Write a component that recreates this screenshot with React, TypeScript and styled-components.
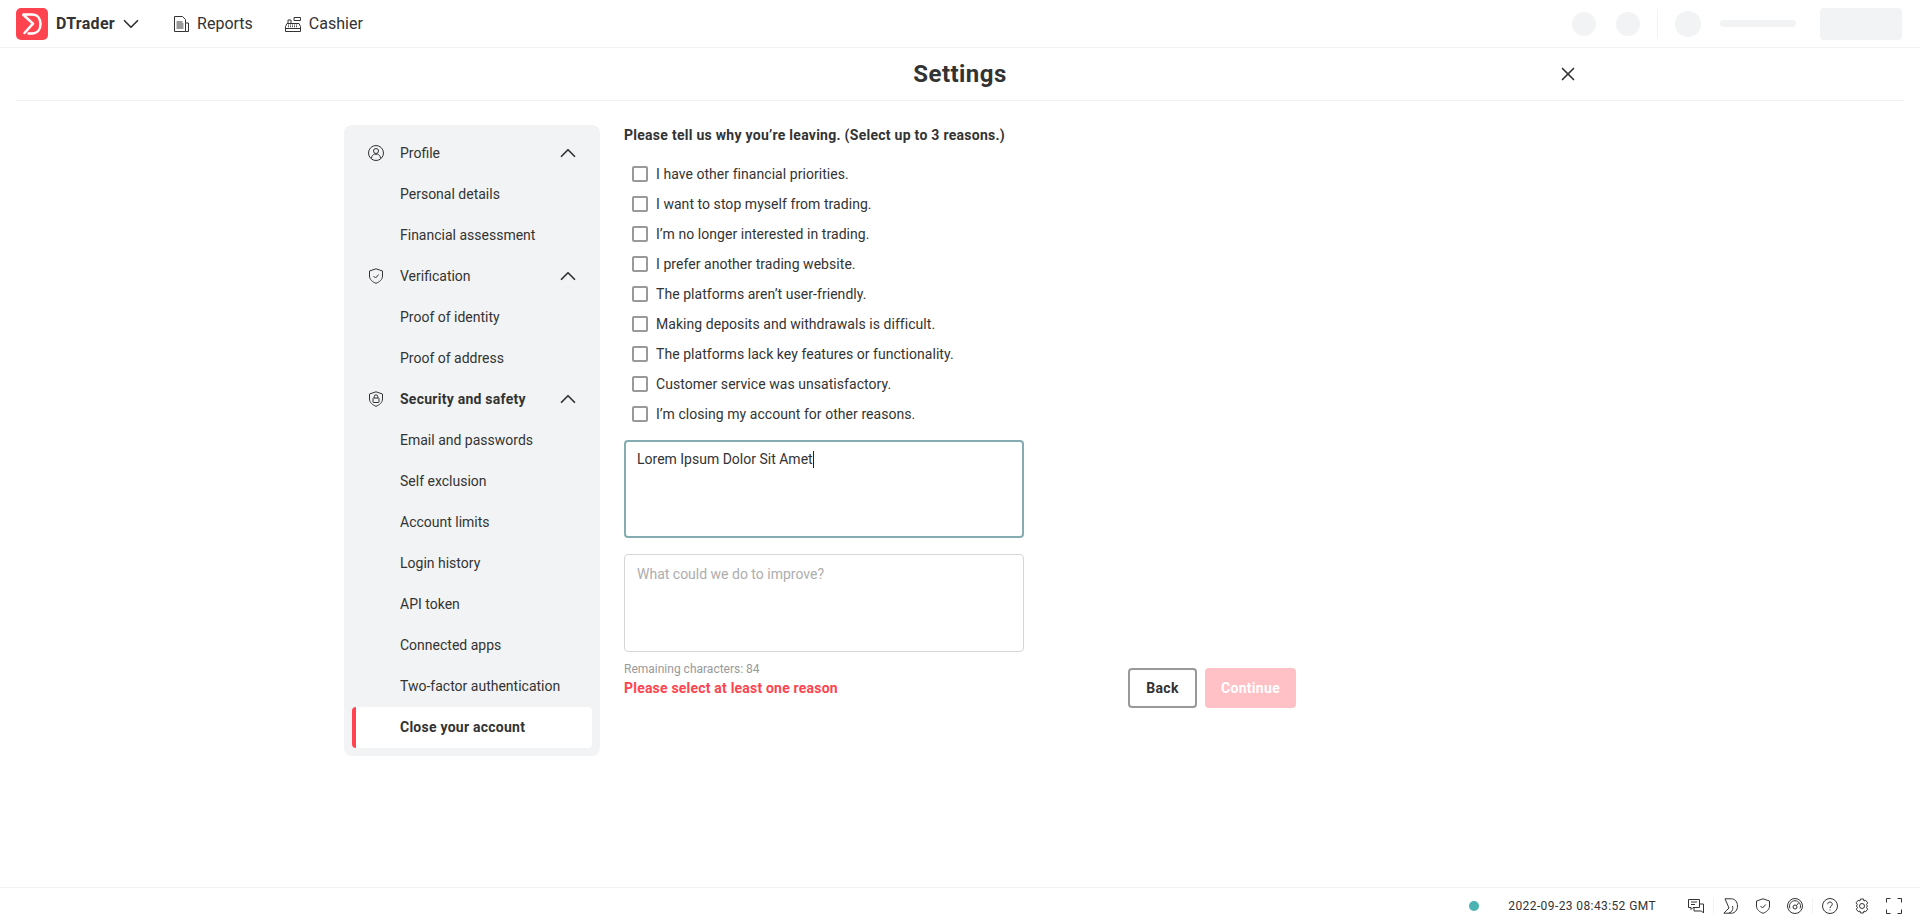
import React from "react";
import styled, {createGlobalStyle} from "styled-components";
import {ChevronDown, ChevronUp, X} from "lucide-react";

const GlobalStyle = createGlobalStyle`
  html, body {
    margin: 0;
    padding: 0;
    height: 100%;
    background: #fff;
    color: #333;
    font-family: Roboto, "Liberation Sans", sans-serif;
  }
  * { box-sizing: border-box; }
`;

const Page = styled.div`
  width: 1920px;
  height: 923px;
  display: flex;
  flex-direction: column;
  overflow: hidden;
`;

const Header = styled.header`
  height: 48px;
  flex: none;
  display: flex;
  align-items: center;
  justify-content: space-between;
  padding: 0 18px 0 16px;
  border-bottom: 1px solid #f2f3f4;
`;

const HeaderLeft = styled.div`
  display: flex;
  align-items: center;
`;

const LogoBox = styled.div`
  width: 32px;
  height: 32px;
  display: flex;
`;

const Brand = styled.span`
  margin-left: 8px;
  font-size: 16px;
  font-weight: 700;
  letter-spacing: 0.3px;
  color: #333;
`;

const BrandCaret = styled.span`
  display: flex;
  margin-left: 3px;
  color: #333;
`;

const NavLink = styled.a<{$first?: boolean}>`
  display: flex;
  align-items: center;
  gap: 8px;
  margin-left: ${p => (p.$first ? "29px" : "32px")};
  font-size: 16px;
  color: #333;
`;

const HeaderRight = styled.div`
  display: flex;
  align-items: center;
`;

const SkeletonCircle = styled.div<{$size: number; $gap: number}>`
  width: ${p => p.$size}px;
  height: ${p => p.$size}px;
  margin-right: ${p => p.$gap}px;
  border-radius: 50%;
  background: #f2f3f4;
`;

const HeaderDivider = styled.div`
  width: 1px;
  height: 29px;
  margin-right: 17px;
  background: #f2f3f4;
`;

const SkeletonBar = styled.div`
  width: 76px;
  height: 7px;
  margin-right: 24px;
  border-radius: 4px;
  background: #f2f3f4;
`;

const SkeletonButton = styled.div`
  width: 82px;
  height: 32px;
  border-radius: 4px;
  background: #f2f3f4;
`;

const TitleBar = styled.div`
  position: relative;
  height: 53px;
  flex: none;
  margin: 0 16px;
  display: flex;
  align-items: center;
  justify-content: center;
  border-bottom: 1px solid #f2f3f4;
`;

const Title = styled.h1`
  margin: 0;
  font-size: 24px;
  font-weight: 700;
  letter-spacing: 0.45px;
  color: #333;
`;

const CloseButton = styled.span`
  position: absolute;
  left: 1541px;
  top: 15px;
  display: flex;
  color: #333;
`;

const Main = styled.main`
  flex: 1;
  display: flex;
  align-items: flex-start;
  padding: 24px 0 0 344px;
`;

const Sidebar = styled.nav`
  width: 256px;
  flex: none;
  padding: 8px;
  border-radius: 8px;
  background: #f2f3f4;
`;

const SideRow = styled.div<{$active?: boolean; $bold?: boolean; $group?: boolean}>`
  height: 41px;
  display: flex;
  align-items: center;
  padding-left: ${p => (p.$group ? "16px" : "48px")};
  padding-right: 11px;
  padding-bottom: 1px;
  font-size: 14px;
  font-weight: ${p => (p.$active || p.$bold ? 700 : 400)};
  letter-spacing: ${p => (p.$active || p.$bold ? "0.25px" : "0")};
  color: #333;
  border-radius: 4px;
  background: ${p => (p.$active ? "#fff" : "transparent")};
  ${p => p.$active && "border-left: 4px solid #ff444f; padding-left: 44px;"}
`;

const SideIcon = styled.span`
  display: flex;
  margin-right: 16px;
  color: #333;
`;

const SideCaret = styled.span`
  display: flex;
  margin-left: auto;
  color: #333;
`;

const Content = styled.section`
  width: 672px;
  margin-left: 24px;
`;

const Question = styled.p`
  margin: 0 0 14px;
  font-size: 14px;
  line-height: 20px;
  font-weight: 700;
  letter-spacing: 0.27px;
  color: #333;
`;

const Reasons = styled.div`
  display: flex;
  flex-direction: column;
  padding-left: 8px;
`;

const Reason = styled.label`
  height: 30px;
  display: flex;
  align-items: center;
  gap: 8px;
  font-size: 14px;
  letter-spacing: 0.05px;
  color: #333;
`;

const Check = styled.span`
  width: 16px;
  height: 16px;
  flex: none;
  border: 2px solid #999;
  border-radius: 2px;
`;

const TextBox = styled.div<{$focused?: boolean}>`
  width: 400px;
  height: 98px;
  margin-top: ${p => (p.$focused ? "11px" : "16px")};
  padding: ${p => (p.$focused ? "7px 11px" : "9px 12px")};
  border: ${p => (p.$focused ? "2px solid #85acb0" : "1.5px solid #d6d6d6")};
  border-radius: 4px;
  font-size: 14px;
  line-height: 20px;
  color: ${p => (p.$focused ? "#333" : "#adadad")};
`;

const Caret = styled.span`
  display: inline-block;
  width: 1px;
  height: 17px;
  vertical-align: -4px;
  background: #222;
`;

const FormFooter = styled.div`
  display: flex;
  justify-content: space-between;
`;

const FormMessages = styled.div`
  padding-top: 10px;
`;

const Remaining = styled.div`
  font-size: 12px;
  line-height: 14px;
  color: #999;
`;

const ErrorText = styled.div`
  margin-top: 2px;
  font-size: 14px;
  line-height: 20px;
  font-weight: 700;
  letter-spacing: 0.2px;
  color: #ff444f;
`;

const Buttons = styled.div`
  display: flex;
  gap: 8px;
  padding-top: 16px;
`;

const Button = styled.button<{$primary?: boolean}>`
  height: 40px;
  padding: 0;
  width: ${p => (p.$primary ? "91px" : "69px")};
  border-radius: 4px;
  border: ${p => (p.$primary ? "none" : "2px solid #999")};
  background: ${p => (p.$primary ? "#ffc1c5" : "#fff")};
  color: ${p => (p.$primary ? "#fff" : "#333")};
  font-family: inherit;
  font-size: 14px;
  font-weight: 700;
  letter-spacing: 0.3px;
`;

const Footer = styled.footer`
  height: 36px;
  flex: none;
  display: flex;
  align-items: center;
  justify-content: flex-end;
  padding-right: 18px;
  border-top: 1px solid #f2f3f4;
`;

const StatusDot = styled.span`
  width: 10px;
  height: 10px;
  margin-right: 29px;
  border-radius: 50%;
  background: #4bb4b3;
`;

const Clock = styled.span`
  margin-right: 32px;
  font-size: 12px;
  letter-spacing: 0.4px;
  color: #333;
`;

const FooterIcon = styled.span<{$gap: number}>`
  display: flex;
  margin-right: ${p => p.$gap}px;
  color: #333;
`;

const FooterDivider = styled.span`
  width: 1px;
  height: 16px;
  margin: 0 9px;
  background: #f2f3f4;
`;

const LogoMark = () => (
  <svg width="32" height="32" viewBox="0 0 32 32" fill="none">
    <rect width="32" height="32" rx="5" fill="#ff444f"/>
    <path d="M7.500 6.500H16c5.500 0 8.500 4 8.500 9.500s-3 9.500-8.500 9.500h-3.500" stroke="#fff" strokeWidth="2.500" strokeLinecap="round"/>
    <path d="M7.500 7l9.500 8.700L8.500 25" stroke="#fff" strokeWidth="2.500" strokeLinecap="round" strokeLinejoin="round"/>
  </svg>
);

const ReportsIcon = () => (
  <svg width="16" height="16" viewBox="0 0 16 16" fill="none" stroke="currentColor" strokeWidth="1">
    <path d="M1.500 15.500V.5h8l3 3v12z"/>
    <path d="M12.500 7h3v8.500h-3M3.500 6h6M3.500 8h7M3.500 10h7M3.500 12h7"/>
  </svg>
);

const CashierIcon = () => (
  <svg width="16" height="16" viewBox="0 0 16 16" fill="none" stroke="currentColor" strokeWidth="1">
    <path d="M.5 15.500v-5l1.500-3h12l1.500 3v5z"/>
    <path d="M.5 12.500h15M3 9h1M5 9h1M7 9h1M9 9h1M11 9h1M3 10.700h1M5 10.700h1M7 10.700h1M9 10.700h1M11 10.700h1"/>
    <path d="M3 7V4h3v3M9 1.500h6.500v3H9z"/>
  </svg>
);

const ProfileIcon = () => (
  <svg width="16" height="16" viewBox="0 0 16 16" fill="none" stroke="currentColor" strokeWidth="1">
    <circle cx="8" cy="8" r="7.500"/>
    <circle cx="8" cy="6" r="2.500"/>
    <path d="M3.500 13.500c0-2.500 1.500-4 3-4.300h3c1.500.3 3 1.800 3 4.300"/>
  </svg>
);

const ShieldCheckIcon = () => (
  <svg width="16" height="16" viewBox="0 0 16 16" fill="none" stroke="currentColor" strokeWidth="1">
    <path d="M8 .8l6.500 2.200v5c0 3.500-3 6-6.500 7.300C4.500 14 1.500 11.500 1.500 8V3z"/>
    <path d="M5.500 8l2 2 3.200-3.500"/>
  </svg>
);

const ShieldLockIcon = () => (
  <svg width="16" height="16" viewBox="0 0 16 16" fill="none" stroke="currentColor" strokeWidth="1">
    <path d="M8 .8l6.500 2.200v5c0 3.500-3 6-6.500 7.300C4.500 14 1.500 11.500 1.500 8V3z"/>
    <rect x="5" y="7" width="6" height="4.500" rx=".5"/>
    <path d="M6.300 7V5.500a1.700 1.700 0 013.400 0V7"/>
  </svg>
);

const ChatIcon = () => (
  <svg width="16" height="16" viewBox="0 0 16 16" fill="none" stroke="currentColor" strokeWidth="1">
    <path d="M.5 1.500h11v8H5L3 11.500v-2H.5z"/>
    <path d="M3 4h6M3 6.500h4M11.500 6h4v9l-2-2H6v-3.500"/>
  </svg>
);

const ChartTypeIcon = () => (
  <svg width="16" height="16" viewBox="0 0 16 16" fill="none" stroke="currentColor" strokeWidth="1">
    <path d="M2 .8h6.500c3.500 0 6 3.200 6 7.200s-2.500 7.200-6 7.200H.8L6 10 2 .8z"/>
    <path d="M6 15c3-1 4.500-3.500 3.500-7"/>
  </svg>
);

const GaugeIcon = () => (
  <svg width="16" height="16" viewBox="0 0 16 16" fill="none" stroke="currentColor" strokeWidth="1">
    <circle cx="8" cy="8" r="7.500"/>
    <path d="M3 10.500a5.500 5.500 0 1110 0"/>
    <circle cx="8" cy="9" r="2"/>
    <path d="M9.500 7.500l2-2.500"/>
  </svg>
);

const HelpIcon = () => (
  <svg width="16" height="16" viewBox="0 0 16 16" fill="none" stroke="currentColor" strokeWidth="1">
    <circle cx="8" cy="8" r="7.500"/>
    <path d="M5.700 6.200C5.700 4.800 6.700 4 8 4s2.300.9 2.300 2.100c0 1.800-2.300 1.900-2.300 3.900"/>
    <path d="M8 11.500v1"/>
  </svg>
);

const GearIcon = () => (
  <svg width="16" height="16" viewBox="0 0 16 16" fill="none" stroke="currentColor" strokeWidth="1">
    <path d="M6.500 1h3l.5 2 1.700-.7 2 2.500-1.200 1.700.9 1.500-.9 1.500 1.200 1.700-2 2.500-1.700-.7-.5 2h-3l-.5-2-1.700.7-2-2.500 1.200-1.700L2.400 8l.9-1.500-1.200-1.700 2-2.500 1.700.7z"/>
    <circle cx="8" cy="8" r="2.500"/>
  </svg>
);

const FullscreenIcon = () => (
  <svg width="16" height="16" viewBox="0 0 16 16" fill="none" stroke="currentColor" strokeWidth="1">
    <path d="M.5 4.500v-4h4M11.500.5h4v4M15.500 11.500v4h-4M4.500 15.500h-4v-4"/>
  </svg>
);

const reasons = [
  "I have other financial priorities.",
  "I want to stop myself from trading.",
  "I’m no longer interested in trading.",
  "I prefer another trading website.",
  "The platforms aren’t user-friendly.",
  "Making deposits and withdrawals is difficult.",
  "The platforms lack key features or functionality.",
  "Customer service was unsatisfactory.",
  "I’m closing my account for other reasons.",
];

const sideGroups = [
  {title: "Profile", icon: <ProfileIcon/>, items: ["Personal details", "Financial assessment"]},
  {title: "Verification", icon: <ShieldCheckIcon/>, items: ["Proof of identity", "Proof of address"]},
  {
    title: "Security and safety",
    icon: <ShieldLockIcon/>,
    bold: true,
    items: ["Email and passwords", "Self exclusion", "Account limits", "Login history", "API token", "Connected apps", "Two-factor authentication", "Close your account"],
  },
];

const App = () => (
  <Page>
    <GlobalStyle/>
    <Header>
      <HeaderLeft>
        <LogoBox><LogoMark/></LogoBox>
        <Brand>DTrader</Brand>
        <BrandCaret><ChevronDown size={26} strokeWidth={1.6}/></BrandCaret>
        <NavLink $first><ReportsIcon/>Reports</NavLink>
        <NavLink><CashierIcon/>Cashier</NavLink>
      </HeaderLeft>
      <HeaderRight>
        <SkeletonCircle $size={24} $gap={20}/>
        <SkeletonCircle $size={24} $gap={17}/>
        <HeaderDivider/>
        <SkeletonCircle $size={26} $gap={19}/>
        <SkeletonBar/>
        <SkeletonButton/>
      </HeaderRight>
    </Header>
    <TitleBar>
      <Title>Settings</Title>
      <CloseButton><X size={22} strokeWidth={1.8}/></CloseButton>
    </TitleBar>
    <Main>
      <Sidebar>
        {sideGroups.map(group => (
          <React.Fragment key={group.title}>
            <SideRow $group $bold={group.bold}>
              <SideIcon>{group.icon}</SideIcon>
              {group.title}
              <SideCaret><ChevronUp size={26} strokeWidth={1.6}/></SideCaret>
            </SideRow>
            {group.items.map(item => (
              <SideRow key={item} $active={item === "Close your account"}>{item}</SideRow>
            ))}
          </React.Fragment>
        ))}
      </Sidebar>
      <Content>
        <Question>Please tell us why you’re leaving. (Select up to 3 reasons.)</Question>
        <Reasons>
          {reasons.map(r => (
            <Reason key={r}><Check/>{r}</Reason>
          ))}
        </Reasons>
        <TextBox $focused>Lorem Ipsum Dolor Sit Amet<Caret/></TextBox>
        <TextBox>What could we do to improve?</TextBox>
        <FormFooter>
          <FormMessages>
            <Remaining>Remaining characters: 84</Remaining>
            <ErrorText>Please select at least one reason</ErrorText>
          </FormMessages>
          <Buttons>
            <Button>Back</Button>
            <Button $primary>Continue</Button>
          </Buttons>
        </FormFooter>
      </Content>
    </Main>
    <Footer>
      <StatusDot/>
      <Clock>2022-09-23 08:43:52 GMT</Clock>
      <FooterIcon $gap={0}><ChatIcon/></FooterIcon>
      <FooterDivider/>
      <FooterIcon $gap={16}><ChartTypeIcon/></FooterIcon>
      <FooterIcon $gap={16}><ShieldCheckIcon/></FooterIcon>
      <FooterIcon $gap={0}><GaugeIcon/></FooterIcon>
      <FooterDivider/>
      <FooterIcon $gap={16}><HelpIcon/></FooterIcon>
      <FooterIcon $gap={16}><GearIcon/></FooterIcon>
      <FooterIcon $gap={0}><FullscreenIcon/></FooterIcon>
    </Footer>
  </Page>
);

export default App;
